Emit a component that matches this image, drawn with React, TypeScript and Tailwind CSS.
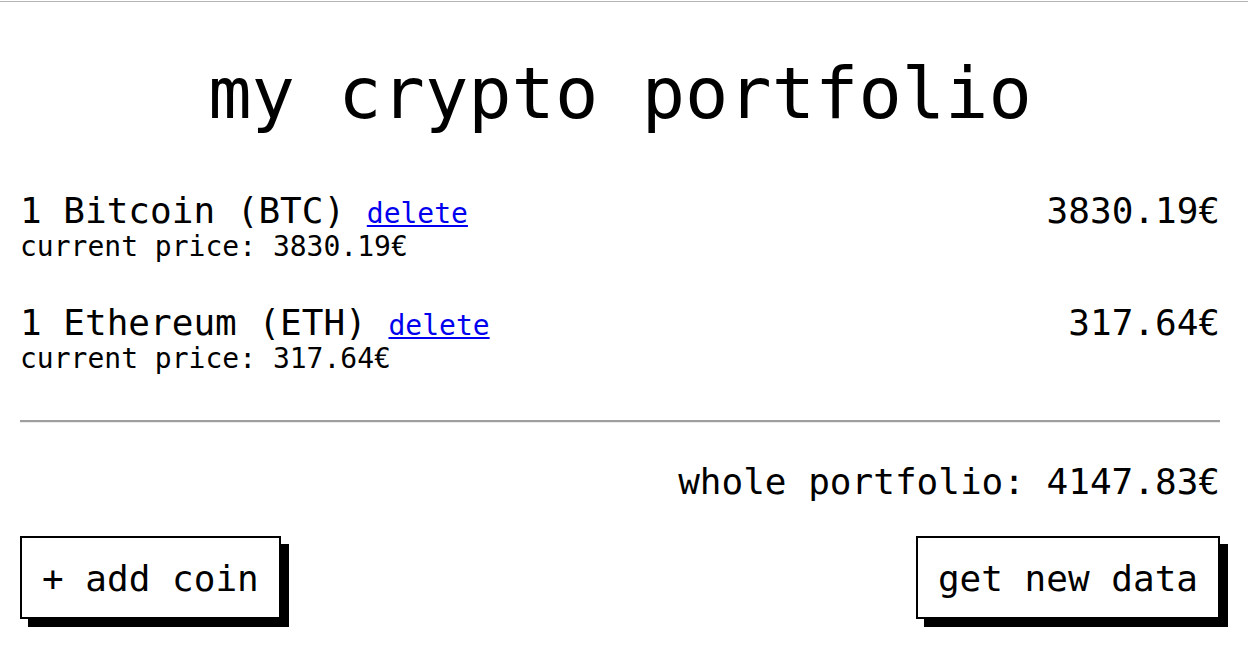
import React from "react";

const coins = [
  { name: "1 Bitcoin (BTC)", price: "3830.19€" },
  { name: "1 Ethereum (ETH)", price: "317.64€" },
];

export default function App() {
  return (
    <div
      className="min-h-[652px] bg-white text-black"
      style={{ fontFamily: '"DejaVu Sans Mono", "Liberation Mono", monospace' }}
    >
      <div className="h-[1px] mt-[1px] bg-[#b5b5b5]" />
      <div className="w-[1200px] ml-[20px]">
        <h1 className="mt-[49px] text-center text-[72px] leading-[84px] font-normal">
          my crypto portfolio
        </h1>
        <div className="mt-[58px] flex flex-col gap-[43px]">
          {coins.map((c) => (
            <div key={c.name} className="flex justify-between">
              <div>
                <div className="h-[36px] text-[36px] leading-[36px]">
                  {c.name}{" "}
                  <a href="#" className="text-[28px] leading-[28px] text-[#0000ee] underline">
                    delete
                  </a>
                </div>
                <div className="mt-[3px] text-[28px] leading-[30px]">current price: {c.price}</div>
              </div>
              <div className="text-[36px] leading-[36px]">{c.price}</div>
            </div>
          ))}
        </div>
        <div className="mt-[46px] h-0 border-t-2 border-t-[#9e9e9e] border-b border-b-[#ececec]" />
        <div className="mt-[41px] text-right text-[36px] leading-[36px]">
          whole portfolio: 4147.83€
        </div>
        <div className="mt-[36px] flex justify-between">
          <button className="border-2 border-black bg-white px-[20px] pt-[23px] pb-[20px] text-[36px] leading-[36px] shadow-[8px_8px_0_#000]">
            + add coin
          </button>
          <button className="border-2 border-black bg-white px-[20px] pt-[23px] pb-[20px] text-[36px] leading-[36px] shadow-[8px_8px_0_#000]">
            get new data
          </button>
        </div>
      </div>
    </div>
  );
}
